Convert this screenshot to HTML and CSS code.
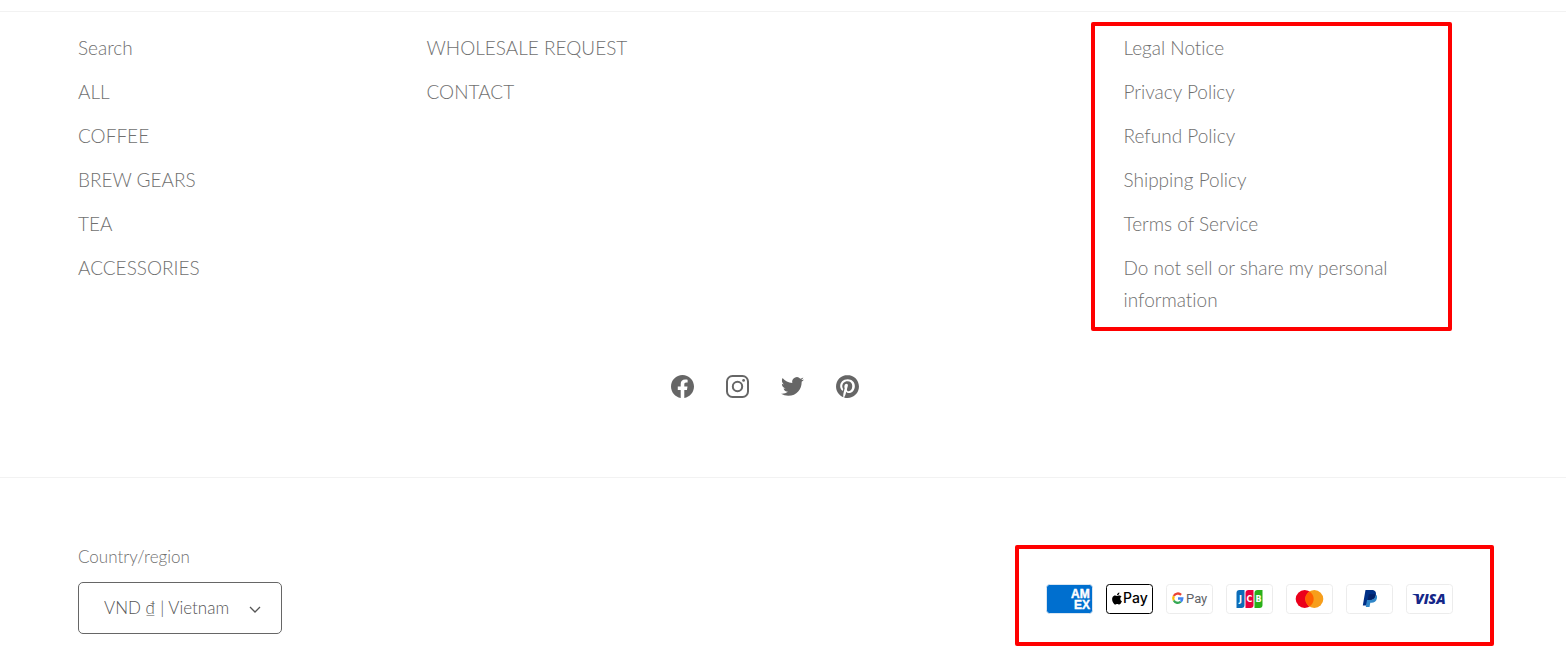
FILE: index.html
```html
<!DOCTYPE html>
<html lang="en">
<head>
<meta charset="utf-8">
<meta name="viewport" content="width=device-width, initial-scale=1">
<title>Store footer</title>
<link rel="stylesheet" href="styles.css">
</head>
<body>
<footer class="footer">
  <div class="footer-top">
    <div class="columns">
      <ul class="links">
        <li><a href="#">Search</a></li>
        <li><a href="#">ALL</a></li>
        <li><a href="#">COFFEE</a></li>
        <li><a href="#">BREW GEARS</a></li>
        <li><a href="#">TEA</a></li>
        <li><a href="#">ACCESSORIES</a></li>
      </ul>
      <ul class="links">
        <li><a href="#">WHOLESALE REQUEST</a></li>
        <li><a href="#">CONTACT</a></li>
      </ul>
      <ul class="links links-policy marked">
        <li><a href="#">Legal Notice</a></li>
        <li><a href="#">Privacy Policy</a></li>
        <li><a href="#">Refund Policy</a></li>
        <li><a href="#">Shipping Policy</a></li>
        <li><a href="#">Terms of Service</a></li>
        <li><a href="#">Do not sell or share my personal information</a></li>
      </ul>
    </div>
    <ul class="social">
      <li><a href="#" aria-label="Facebook"><svg viewBox="2 2 16 16"><path d="M18 10.049C18 5.603 14.419 2 10 2c-4.419 0-8 3.603-8 8.049C2 14.067 4.925 17.396 8.75 18v-5.624H6.719v-2.328h2.03V8.275c0-2.017 1.195-3.132 3.023-3.132.874 0 1.79.158 1.79.158v1.98h-1.009c-.994 0-1.303.621-1.303 1.258v1.51h2.219l-.355 2.326H11.25V18c3.825-.604 6.75-3.933 6.75-7.951Z"/></svg></a></li>
      <li><a href="#" aria-label="Instagram"><svg viewBox="0 0 23 23"><rect x="1" y="1" width="21" height="21" rx="5.5" fill="none" stroke="currentColor" stroke-width="2"/><circle cx="11.5" cy="11.5" r="4.7" fill="none" stroke="currentColor" stroke-width="2"/><circle cx="17.6" cy="5.4" r="1.4"/></svg></a></li>
      <li><a href="#" aria-label="Twitter"><svg viewBox="0 0 24 24"><path d="M23.953 4.57a10 10 0 01-2.825.775 4.958 4.958 0 002.163-2.723c-.951.555-2.005.959-3.127 1.184a4.92 4.92 0 00-8.384 4.482C7.69 8.095 4.067 6.13 1.64 3.162a4.822 4.822 0 00-.666 2.475c0 1.71.87 3.213 2.188 4.096a4.904 4.904 0 01-2.228-.616v.06a4.923 4.923 0 003.946 4.827 4.996 4.996 0 01-2.212.085 4.936 4.936 0 004.604 3.417 9.867 9.867 0 01-6.102 2.105c-.39 0-.779-.023-1.17-.067a13.995 13.995 0 007.557 2.209c9.053 0 13.998-7.496 13.998-13.985 0-.21 0-.42-.015-.63A9.935 9.935 0 0024 4.59z"/></svg></a></li>
      <li><a href="#" aria-label="Pinterest"><svg viewBox="0 0 24 24"><path d="M12.017 0C5.396 0 .029 5.367.029 11.987c0 5.079 3.158 9.417 7.618 11.162-.105-.949-.199-2.403.041-3.439.219-.937 1.406-5.957 1.406-5.957s-.359-.72-.359-1.781c0-1.663.967-2.911 2.168-2.911 1.024 0 1.518.769 1.518 1.688 0 1.029-.653 2.567-.992 3.992-.285 1.193.6 2.165 1.775 2.165 2.128 0 3.768-2.245 3.768-5.487 0-2.861-2.063-4.869-5.008-4.869-3.41 0-5.409 2.562-5.409 5.199 0 1.033.394 2.143.889 2.741.099.12.112.225.085.345-.09.375-.293 1.199-.334 1.363-.053.225-.172.271-.401.165-1.495-.69-2.433-2.878-2.433-4.646 0-3.776 2.748-7.252 7.92-7.252 4.158 0 7.392 2.967 7.392 6.923 0 4.135-2.607 7.462-6.233 7.462-1.214 0-2.354-.629-2.758-1.379l-.749 2.848c-.269 1.045-1.004 2.352-1.498 3.146 1.123.345 2.306.535 3.55.535 6.607 0 11.985-5.365 11.985-11.987C23.97 5.39 18.592.026 11.985.026L12.017 0z"/></svg></a></li>
    </ul>
  </div>
  <div class="footer-bottom">
    <form class="region">
      <label class="region-label" for="country">Country/region</label>
      <div class="select-box">
        <select class="select" id="country"><option>VND ₫ | Vietnam</option></select>
        <svg class="chevron" viewBox="0 0 12 8"><path d="M1 1l5 5 5-5" fill="none" stroke="currentColor" stroke-width="1.3"/></svg>
      </div>
    </form>
    <ul class="payments marked">
      <li><svg class="card" viewBox="0 0 47 30" role="img" aria-label="American Express"><rect x=".5" y=".5" width="46" height="29" rx="3" fill="#006fcf" stroke="#d9e6f2"/><g class="amex"><text x="25" y="14">AM</text><text x="28" y="25">EX</text></g></svg></li>
      <li><svg class="card" viewBox="0 0 47 30" role="img" aria-label="Apple Pay"><rect x=".5" y=".5" width="46" height="29" rx="3" fill="#fff" stroke="#000"/><path transform="translate(5 8.5) scale(.5)" d="M12.152 6.896c-.948 0-2.415-1.078-3.96-1.04-2.04.027-3.91 1.183-4.961 3.014-2.117 3.675-.546 9.103 1.519 12.09 1.013 1.454 2.208 3.09 3.792 3.039 1.52-.065 2.09-.987 3.935-.987 1.831 0 2.35.987 3.96.948 1.637-.026 2.676-1.48 3.676-2.948 1.156-1.688 1.636-3.325 1.662-3.415-.039-.013-3.182-1.221-3.22-4.857-.026-3.04 2.48-4.494 2.597-4.559-1.429-2.09-3.623-2.324-4.39-2.376-2-.156-3.675 1.09-4.61 1.09zM15.53 3.83c.843-1.012 1.4-2.427 1.245-3.83-1.207.052-2.662.805-3.532 1.818-.78.896-1.454 2.338-1.273 3.714 1.338.104 2.715-.867 3.559-1.701"/><text class="apple-pay" x="17" y="19">Pay</text></svg></li>
      <li><svg class="card" viewBox="0 0 47 30" role="img" aria-label="Google Pay"><rect class="frame" x=".5" y=".5" width="46" height="29" rx="3"/><g fill="none" stroke-width="2.3"><path d="M15.1 10.8A4.6 4.6 0 0 0 7.8 12.1" stroke="#ea4335"/><path d="M7.8 12.1A4.6 4.6 0 0 0 7.8 16.5" stroke="#fbbc04"/><path d="M7.8 16.5A4.6 4.6 0 0 0 14.8 17.7" stroke="#34a853"/><path d="M14.8 17.7A4.6 4.6 0 0 0 16.3 14.5H12" stroke="#4285f4"/></g><text class="google-pay" x="20" y="19">Pay</text></svg></li>
      <li><svg class="card" viewBox="0 0 47 30" role="img" aria-label="JCB"><rect class="frame" x=".5" y=".5" width="46" height="29" rx="3"/><path d="M13.5 6h5v15q0 3-3 3h-5V9q0-3 3-3z" fill="#0c6cb8"/><path d="M22.5 6h5v15q0 3-3 3h-5V9q0-3 3-3z" fill="#e8003c"/><path d="M31.5 6h5v15q0 3-3 3h-5V9q0-3 3-3z" fill="#2ab01a"/><g class="jcb"><text x="14.5" y="18">J</text><text x="23.5" y="18">C</text><text x="32.5" y="18">B</text></g></svg></li>
      <li><svg class="card" viewBox="0 0 47 30" role="img" aria-label="Mastercard"><rect class="frame" x=".5" y=".5" width="46" height="29" rx="3"/><circle cx="18.7" cy="15" r="9" fill="#eb001b"/><circle cx="28.3" cy="15" r="9" fill="#f79e1b"/><path d="M23.5 7.4a9 9 0 0 1 0 15.2 9 9 0 0 1 0-15.2z" fill="#ff5f00"/></svg></li>
      <li><svg class="card" viewBox="0 0 47 30" role="img" aria-label="PayPal"><rect class="frame" x=".5" y=".5" width="46" height="29" rx="3"/><path d="M19.5 6h6c3.3 0 5 1.8 4.4 4.8-.7 3.6-3 5.3-6.4 5.3h-2l-.8 5.4h-3.9z" fill="#003087"/><path d="M29.8 10.5c1.3 1 1.5 2.4 1.1 4-.7 3-2.7 4.2-5.4 4.2h-1.2l-.8 4.3h-3.7l1.2-6.9h2.4c3.6 0 5.8-1.9 6.4-5.6z" fill="#3086c8"/><path d="M22.8 10.2h5c.8 0 1.4.1 2 .5-.7 3.7-2.9 5.4-6.4 5.4h-1.6z" fill="#012169"/></svg></li>
      <li><svg class="card" viewBox="0 0 47 30" role="img" aria-label="Visa"><rect class="frame" x=".5" y=".5" width="46" height="29" rx="3"/><path d="M6.5 10H12l1.5 4Q11 11.2 6.5 10.5z" fill="#142688"/><text class="visa" x="9" y="20">VISA</text></svg></li>
    </ul>
  </div>
</footer>
</body>
</html>
```
FILE: styles.css
```css
* { box-sizing: border-box; }
body {
  margin: 0;
  background: #fff;
  color: #707070;
  font-family: Lato, "Liberation Sans", sans-serif;
  font-size: 19px;
  font-weight: 300;
  font-variant-ligatures: none;
  line-height: 32px;
}
ul { margin: 0; padding: 0; list-style: none; }
a { color: inherit; text-decoration: none; }
svg { display: block; }

.footer { padding-top: 11px; }
.footer-top {
  border-top: 1px solid #f2f2f2;
  padding: 14px 114px 79px 78px;
}
.columns {
  display: grid;
  grid-template-columns: repeat(4, 1fr);
  column-gap: 20px;
}
.links a { display: block; padding: 6px 0; }
.links-policy { grid-column: 4; }

.marked { position: relative; }
.marked::after {
  content: "";
  position: absolute;
  inset: -4px 0 -9px -33px;
  border: 4px solid #f00;
  border-radius: 2px;
  pointer-events: none;
}

.social {
  display: flex;
  justify-content: center;
  gap: 32px;
  padding-top: 53px;
}
.social a { color: #666; }
.social svg { width: 23px; height: 23px; fill: currentColor; }

.footer-bottom {
  display: flex;
  justify-content: space-between;
  border-top: 1px solid #f2f2f2;
  padding: 67px 113px 25px 78px;
}
.region-label {
  display: block;
  margin-bottom: 13px;
  font-size: 17px;
  line-height: 24px;
}
.select-box { position: relative; width: 204px; }
.select {
  appearance: none;
  display: block;
  width: 100%;
  height: 52px;
  padding: 0 40px 2px 25px;
  border: 1px solid #666;
  border-radius: 5px;
  background: #fff;
  color: #555;
  font: 300 17px Lato, "Liberation Sans", sans-serif;
}
.chevron {
  position: absolute;
  top: 24px;
  right: 21px;
  width: 12px;
  height: 8px;
  color: #555;
  pointer-events: none;
}

.payments {
  display: flex;
  gap: 13px;
  align-self: flex-start;
  margin-top: 39px;
}
.payments.marked::after { inset: -39px -41px -32px -31px; }
.card { width: 47px; height: 30px; }
.frame { fill: #fff; stroke: #ececec; }
.card text { font-family: "Liberation Sans", sans-serif; }
.card .amex text { font-size: 12px; font-weight: 700; fill: #fff; stroke: #fff; stroke-width: 0.4px; }
.card .apple-pay { font-family: Inter, sans-serif; font-size: 14px; font-weight: 500; fill: #000; }
.card .google-pay { font-family: Roboto, sans-serif; font-size: 13px; font-weight: 400; fill: #5f6368; }
.card .jcb text { font-family: "DejaVu Sans", sans-serif; font-size: 8px; font-weight: 700; fill: #fff; text-anchor: middle; }
.card .visa { font-family: "Open Sans", sans-serif; font-size: 14px; font-weight: 800; font-style: italic; fill: #142688; }
```
